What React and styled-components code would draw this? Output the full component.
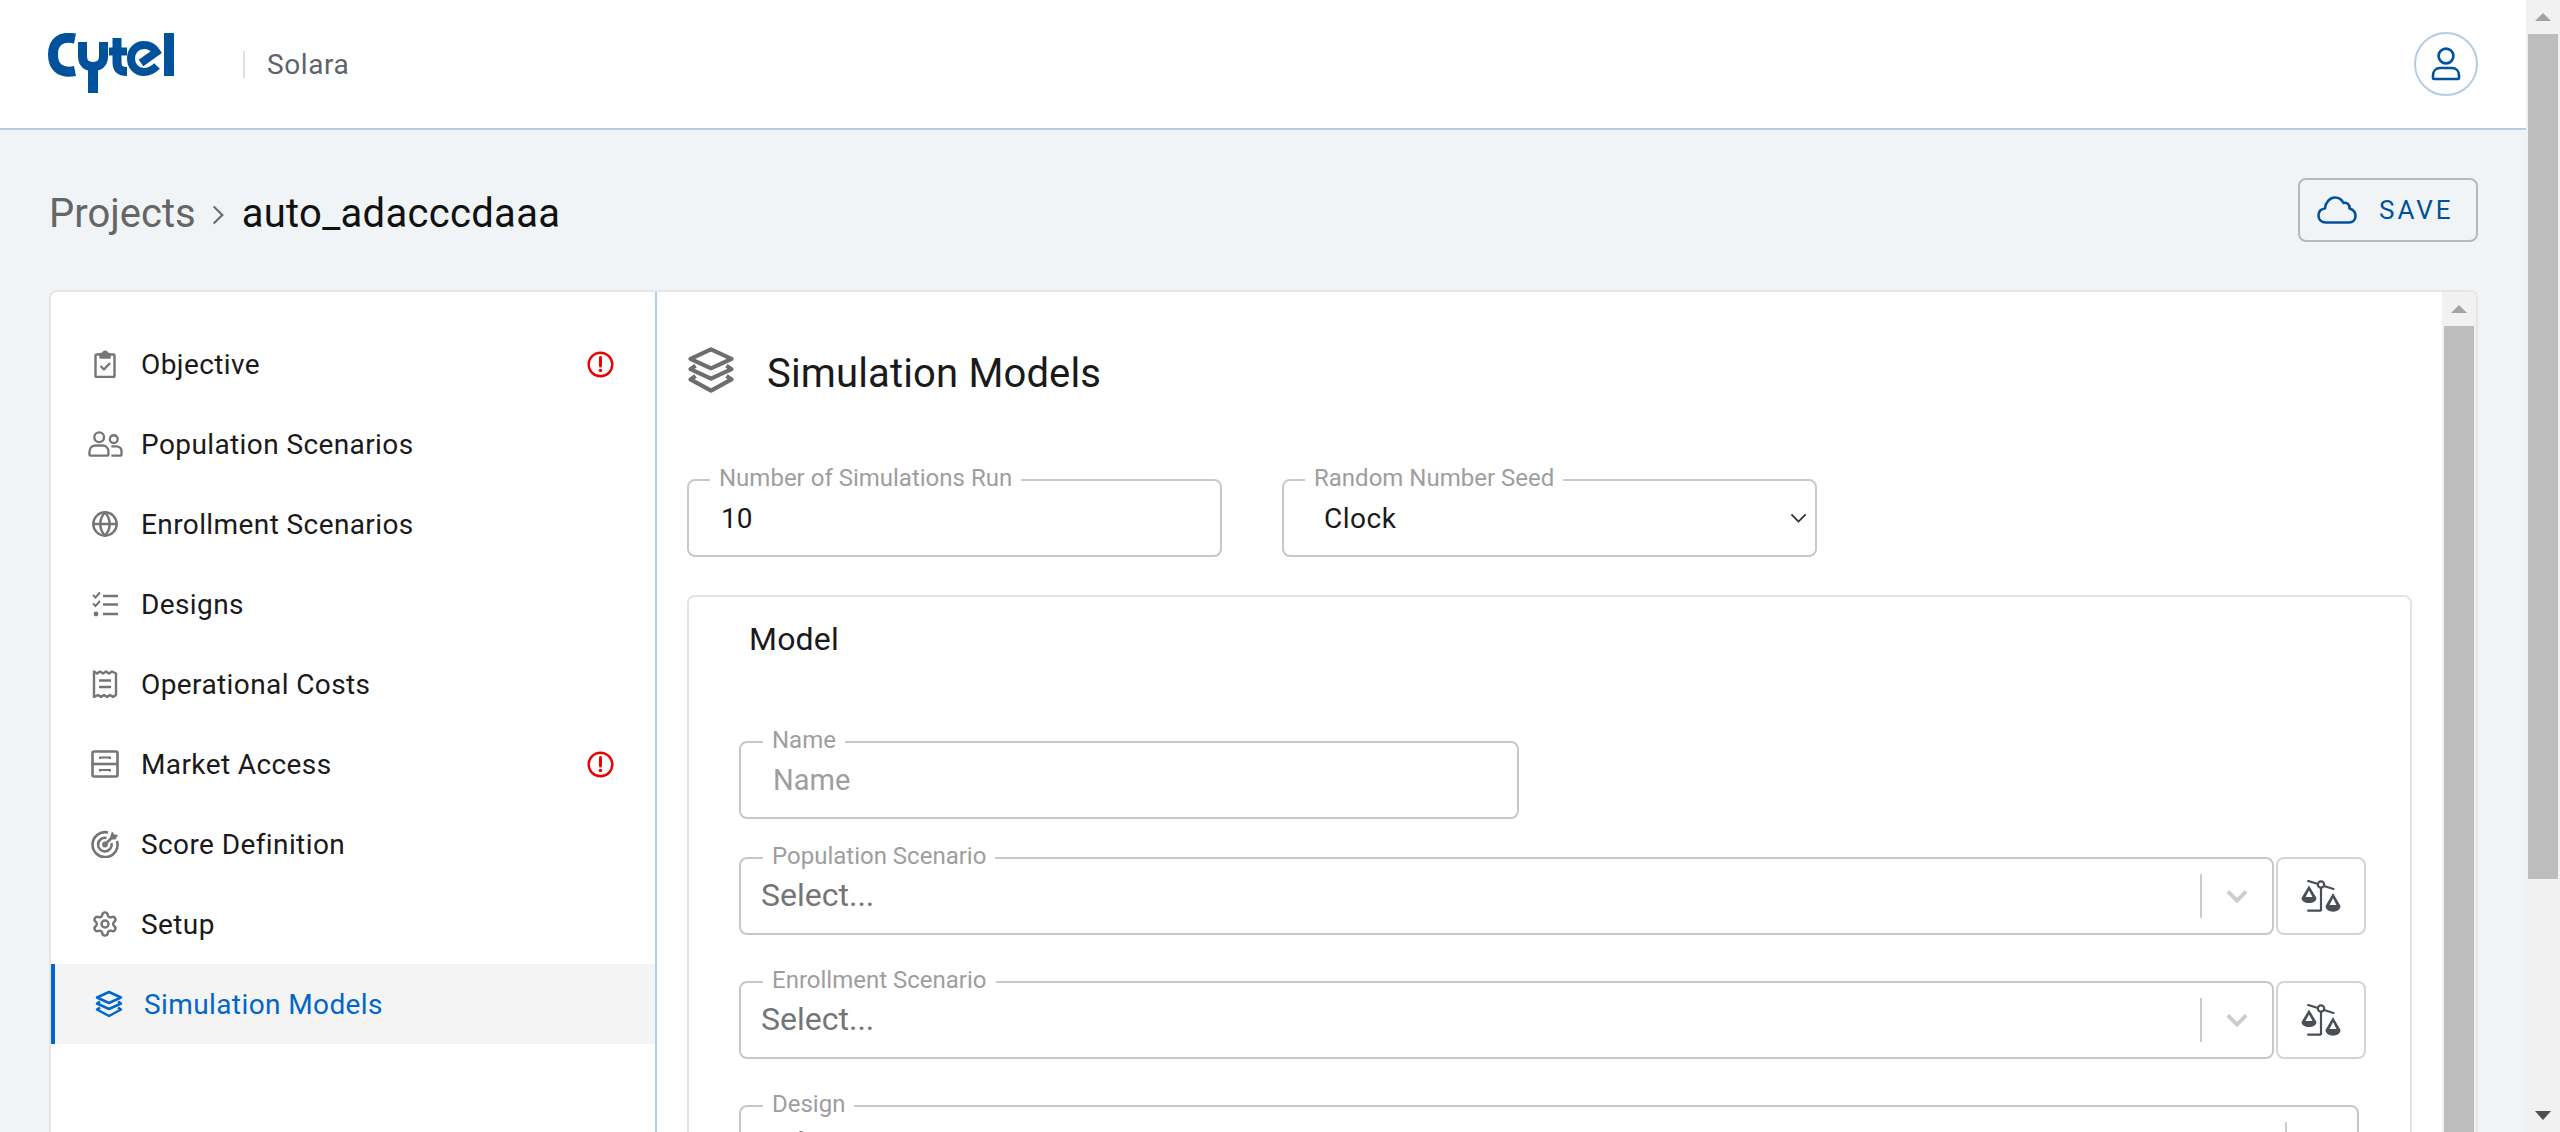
import styled, { createGlobalStyle } from "styled-components"
import { Globe, Settings } from "lucide-react"

const GlobalStyle = createGlobalStyle`
    html, body {
        margin: 0;
        padding: 0;
        height: 100%;
        overflow: hidden;
    }
    body {
        font-family: Roboto, "Liberation Sans", sans-serif;
        color: #1a1a1a;
        background: #f0f4f7;
    }
    * {
        box-sizing: border-box;
    }
`

const CytelLogo = () => (
    <svg width="126" height="60" viewBox="0 0 126 60" fill="none" stroke="#00529b">
        <path d="M27 5.5C12 2.5 5 9.5 5 21.5S12 41 27 38" strokeWidth="10" />
        <path d="M34.5 9V23C34.5 31 39 33.5 45 33.5S55.5 31 55.5 23V9" strokeWidth="9" />
        <path d="M45 33V60" strokeWidth="10" />
        <path d="M69 5V29C69 36 72 38.5 79 38.5" strokeWidth="9" />
        <path d="M61 18.5H79" strokeWidth="8" />
        <path d="M109 33C104 38 100 39 96 39C88 39 83 33 83 25.5S88 12 96 12C102 12 106 15 108.5 19L93 30" strokeWidth="8" />
        <path d="M121 0V43" strokeWidth="10" />
    </svg>
)

const LayersIcon = ({ size, color, weight }) => (
    <svg width={size} height={size} viewBox="0 0 28 28" fill="none" stroke={color} strokeWidth={weight} strokeLinejoin="round">
        <path d="M14 2L26 7.5 14 13 2 7.5Z" />
        <path d="M5 11.5L2 13.5 14 19 26 13.5 23 11.5" />
        <path d="M5 17.5L2 19.5 14 26 26 19.5 23 17.5" />
    </svg>
)

const ScaleIcon = () => (
    <svg width="40" height="32" viewBox="0 0 40 32" fill="none" stroke="#4a4f57" strokeWidth="2.2">
        <circle cx="20" cy="4.5" r="3.2" />
        <path d="M6.3 .7L17 4M23 6L33.3 9.3M20 8V31M6.3 30.7H20" />
        <path
            d="M8 5.5L.5 18C.5 21 4 23 8 23S15.5 21 15.5 18ZM8 10.5L4.5 17H11.5Z"
            fill="#4a4f57"
            fillRule="evenodd"
            stroke="none"
        />
        <path
            d="M32 13L24.5 26C24.5 29.5 28 31.7 32 31.7S39.5 29.5 39.5 26ZM32 18L28.5 25H35.5Z"
            fill="#4a4f57"
            fillRule="evenodd"
            stroke="none"
        />
    </svg>
)

const ClipboardIcon = () => (
    <svg width="28" height="28" viewBox="0 0 28 28" fill="none" stroke="#757575" strokeWidth="2.4" strokeLinejoin="round">
        <path d="M9.5 4.5H5.5A1 1 0 0 0 4.5 5.5V26A1 1 0 0 0 5.5 27H22.5A1 1 0 0 0 23.5 26V5.5A1 1 0 0 0 22.5 4.5H18.5" />
        <path d="M9.5 7.5V4H12C12 1 16 1 16 4H18.5V7.5Z" fill="#757575" />
        <path d="M9.5 16L13 19.5 19 13" />
    </svg>
)

const UsersIcon = () => (
    <svg width="35" height="28" viewBox="0 0 36 28" fill="none" stroke="#757575" strokeWidth="2.4">
        <circle cx="11.5" cy="7" r="5" />
        <circle cx="26.5" cy="9" r="4" />
        <path d="M1.5 22C1.5 17.5 5 15.5 8 15.5H15C18 15.5 21 17.5 21 22V25A1 1 0 0 1 20 26H2.5A1 1 0 0 1 1.5 25Z" />
        <path d="M24 16.5H29C32 16.5 34.5 18 34.5 22V25A1 1 0 0 1 33.5 26H24" />
    </svg>
)

const ChecklistIcon = () => (
    <svg width="28" height="28" viewBox="0 0 28 28" fill="none" stroke="#757575" strokeWidth="2.4">
        <path d="M12 6H27M12 14.5H27M12 24H27" />
        <path d="M2 5L4.5 7.5 9 2.5M2 13.5L4.5 16 9 11" strokeWidth="1.9" />
        <circle cx="5" cy="24" r="2.4" fill="#757575" stroke="none" />
    </svg>
)

const ReceiptIcon = () => (
    <svg width="28" height="28" viewBox="0 0 28 28" fill="none" stroke="#757575" strokeWidth="2.4">
        <path d="M3 1.5L6 3.5 9 1.5 12 3.5 15 1.5 18 3.5 21 1.5 25 3.5V25L22 27 19 25 16 27 13 25 10 27 7 25 3 27Z" strokeLinejoin="round" />
        <path d="M8 10.5H20M8 17H20" strokeWidth="2.6" />
    </svg>
)

const CabinetIcon = () => (
    <svg width="28" height="28" viewBox="0 0 28 28" fill="none" stroke="#757575" strokeWidth="2.6">
        <rect x="1.5" y="1.5" width="25" height="25" rx="1.5" />
        <path d="M1.5 14H26.5" />
        <path d="M9 9V7.5H19V9M9 21.5V20H19V21.5" strokeWidth="2" />
    </svg>
)

const TargetIcon = () => (
    <svg width="28" height="28" viewBox="0 0 28 28" fill="none" stroke="#757575" strokeWidth="2.6">
        <path d="M17 2.5A12.5 12.5 0 1 0 26 11" />
        <path d="M15.5 8A6.8 6.8 0 1 0 20.5 13" />
        <circle cx="14" cy="14.5" r="1.6" fill="#757575" />
        <path d="M14 14.5L21 7.5" />
        <path d="M19 7L21 1.5 23.5 4.5 27 5 24.5 9.5 20.5 9.5Z" fill="#757575" stroke="none" />
    </svg>
)

const AlertIcon = () => (
    <svg width="27" height="27" viewBox="0 0 27 27" fill="none" stroke="#ee0000">
        <circle cx="13.5" cy="13.5" r="11.8" strokeWidth="2.4" />
        <path d="M13.5 6.5V15" strokeWidth="3" strokeLinecap="round" />
        <circle cx="13.5" cy="19.5" r="1.7" fill="#ee0000" stroke="none" />
    </svg>
)

const PersonIcon = () => (
    <svg width="30" height="34" viewBox="0 0 30 34" fill="none" stroke="#00529b" strokeWidth="2.6">
        <circle cx="15" cy="9" r="7.4" />
        <path d="M9 21H21C25 21 28 24 28 28.5V31A1 1 0 0 1 27 32H3A1 1 0 0 1 2 31V28.5C2 24 5 21 9 21Z" />
    </svg>
)

const CloudIcon = () => (
    <svg width="40" height="28" viewBox="0 0 40 28" fill="none" stroke="#00529b" strokeWidth="2.6">
        <path d="M9 26.5C4.5 26.5 1.5 23.5 1.5 19.5S4 13 8 12.5C8.5 6 13 1.5 18 1.5C22 1.5 25 4 26.5 7C30 6 33 9 32.5 12.5C36 13.5 38.5 16 38.5 20C38.5 24 35.5 26.5 32 26.5Z" strokeLinejoin="round" />
    </svg>
)

const Chevron = ({ color, width, height, weight }) => (
    <svg width={width} height={height} viewBox="0 0 24 14" fill="none" stroke={color} strokeWidth={weight}>
        <path d="M2 2L12 12 22 2" />
    </svg>
)

const menu = [
    { label: "Objective", icon: <ClipboardIcon />, alert: true },
    { label: "Population Scenarios", icon: <UsersIcon /> },
    { label: "Enrollment Scenarios", icon: <Globe size={28} color="#757575" strokeWidth={2.1} /> },
    { label: "Designs", icon: <ChecklistIcon /> },
    { label: "Operational Costs", icon: <ReceiptIcon /> },
    { label: "Market Access", icon: <CabinetIcon />, alert: true },
    { label: "Score Definition", icon: <TargetIcon /> },
    { label: "Setup", icon: <Settings size={28} color="#757575" strokeWidth={2.1} /> },
]

function ScrollBar({ thumbHeight, downArrow }) {
    return (
        <Track>
            <ArrowBox>
                <ArrowUp />
            </ArrowBox>
            <Thumb style={{ height: thumbHeight }} />
            {downArrow && (
                <ArrowDownBox>
                    <ArrowDown />
                </ArrowDownBox>
            )}
        </Track>
    )
}

function SelectField({ label, compare, narrow }) {
    return (
        <SelectRow>
            <Field $grow $narrow={narrow}>
                <FieldLabel $inset>{label}</FieldLabel>
                <SelectBody>
                    <Placeholder>Select...</Placeholder>
                    <SelectDivider />
                    <SelectArrow>
                        <Chevron color="#cccccc" width="22" height="14" weight="4.2" />
                    </SelectArrow>
                </SelectBody>
            </Field>
            {compare && (
                <CompareButton>
                    <ScaleIcon />
                </CompareButton>
            )}
        </SelectRow>
    )
}

export default function App() {
    return (
        <Screen>
            <GlobalStyle />
            <Main>
                <Header>
                    <Brand>
                        <CytelLogo />
                        <BrandDivider />
                        <AppName>Solara</AppName>
                    </Brand>
                    <UserButton>
                        <PersonIcon />
                    </UserButton>
                </Header>
                <PageHead>
                    <Breadcrumb>
                        <Crumb>Projects</Crumb>
                        <CrumbArrow>
                            <svg width="12" height="22" viewBox="0 0 14 24" fill="none" stroke="#6e6e6e" strokeWidth="2.6">
                                <path d="M2 2L12 12 2 22" />
                            </svg>
                        </CrumbArrow>
                        <CurrentCrumb>auto_adacccdaaa</CurrentCrumb>
                    </Breadcrumb>
                    <SaveButton>
                        <CloudIcon />
                        <span>SAVE</span>
                    </SaveButton>
                </PageHead>
                <Panel>
                    <Sidebar>
                        {menu.map((m) => (
                            <MenuItem key={m.label}>
                                <MenuIcon>{m.icon}</MenuIcon>
                                <span>{m.label}</span>
                                {m.alert && (
                                    <AlertSlot>
                                        <AlertIcon />
                                    </AlertSlot>
                                )}
                            </MenuItem>
                        ))}
                        <MenuItem $active>
                            <MenuIcon>
                                <LayersIcon size={28} color="#0066cc" weight={2.5} />
                            </MenuIcon>
                            <span>Simulation Models</span>
                        </MenuItem>
                    </Sidebar>
                    <Content>
                        <TitleRow>
                            <LayersIcon size={48} color="#6e6e6e" weight={2.4} />
                            <Title>Simulation Models</Title>
                        </TitleRow>
                        <TopFields>
                            <Field>
                                <FieldLabel>Number of Simulations Run</FieldLabel>
                                <ValueInput readOnly value="10" />
                            </Field>
                            <Field>
                                <FieldLabel>Random Number Seed</FieldLabel>
                                <ClockValue>
                                    <span>Clock</span>
                                    <Chevron color="#2b2b2b" width="17" height="10" weight="2.4" />
                                </ClockValue>
                            </Field>
                        </TopFields>
                        <ModelCard>
                            <ModelTitle>Model</ModelTitle>
                            <NameField>
                                <FieldLabel $inset>Name</FieldLabel>
                                <NameInput readOnly placeholder="Name" />
                            </NameField>
                            <SelectField label="Population Scenario" compare />
                            <SelectField label="Enrollment Scenario" compare />
                            <SelectField label="Design" narrow />
                        </ModelCard>
                    </Content>
                    <ScrollBar thumbHeight={1000} />
                </Panel>
            </Main>
            <ScrollBar thumbHeight={845} downArrow />
        </Screen>
    )
}

const Screen = styled.div`
    display: flex;
    height: 100vh;
    overflow: hidden;
`
const Main = styled.div`
    flex: 1;
    min-width: 0;
    display: flex;
    flex-direction: column;
    overflow: hidden;
`
const Track = styled.div`
    flex: none;
    position: relative;
    width: 34px;
    height: 100%;
    padding: 0 2px;
    background: #f1f1f1;
    display: flex;
    flex-direction: column;
    overflow: hidden;
`
const ArrowBox = styled.div`
    flex: none;
    height: 34px;
    display: flex;
    align-items: center;
    justify-content: center;
`
const ArrowDownBox = styled(ArrowBox)`
    position: absolute;
    left: 0;
    right: 0;
    bottom: 0;
`
const ArrowUp = styled.div`
    width: 0;
    height: 0;
    border-left: 8px solid transparent;
    border-right: 8px solid transparent;
    border-bottom: 8px solid #a3a3a3;
`
const ArrowDown = styled.div`
    width: 0;
    height: 0;
    border-left: 8px solid transparent;
    border-right: 8px solid transparent;
    border-top: 9px solid #505050;
`
const Thumb = styled.div`
    flex: none;
    background: #bdbdbd;
`
const Header = styled.header`
    flex: none;
    height: 130px;
    padding: 0 48px;
    background: #ffffff;
    border-bottom: 2px solid #b5cde3;
    display: flex;
    align-items: center;
    justify-content: space-between;
`
const Brand = styled.div`
    display: flex;
    align-items: center;
    height: 100%;
    padding-bottom: 4px;
    svg {
        margin-top: 2px;
    }
`
const BrandDivider = styled.div`
    width: 2px;
    height: 27px;
    margin: 4px 22px 0 69px;
    background: #e0e0e0;
`
const AppName = styled.div`
    font-size: 28px;
    letter-spacing: 0.6px;
    color: #5f6368;
    margin-top: 4px;
`
const UserButton = styled.div`
    width: 64px;
    height: 64px;
    border: 2px solid #b5cde3;
    border-radius: 50%;
    display: flex;
    align-items: center;
    justify-content: center;
`
const PageHead = styled.div`
    flex: none;
    height: 160px;
    padding: 0 48px 0 49px;
    display: flex;
    align-items: center;
    justify-content: space-between;
`
const Breadcrumb = styled.div`
    display: flex;
    align-items: center;
    margin-top: 6px;
`
const Crumb = styled.span`
    font-size: 40px;
    color: #666666;
`
const CrumbArrow = styled.span`
    display: flex;
    margin: 4px 18px 0 16px;
`
const CurrentCrumb = styled.span`
    font-size: 40px;
    letter-spacing: 0.3px;
    color: #111111;
`
const SaveButton = styled.button`
    width: 180px;
    height: 64px;
    background: transparent;
    border: 2px solid #b4b9bd;
    border-radius: 8px;
    padding: 0 0 0 17px;
    display: flex;
    align-items: center;
    gap: 22px;
    color: #00529b;
    font-family: inherit;
    font-size: 26px;
    letter-spacing: 3px;
`
const Panel = styled.div`
    flex: 1;
    min-height: 0;
    margin: 0 48px 0 49px;
    background: #ffffff;
    border: 2px solid #e5e5e5;
    border-bottom: none;
    border-radius: 8px 8px 0 0;
    display: flex;
    overflow: hidden;
`
const Sidebar = styled.nav`
    flex: none;
    width: 606px;
    padding-top: 32px;
    border-right: 2px solid #b5cde3;
`
const MenuItem = styled.div`
    height: 80px;
    display: flex;
    align-items: center;
    padding: 0 41px 0 ${(p) => (p.$active ? "40px" : "36px")};
    border-left: 4px solid ${(p) => (p.$active ? "#0066cc" : "transparent")};
    background: ${(p) => (p.$active ? "#f4f4f4" : "transparent")};
    color: ${(p) => (p.$active ? "#0066cc" : "#1a1a1a")};
    font-size: 28px;
    letter-spacing: 0.4px;
    gap: ${(p) => (p.$active ? "21px" : "22px")};
`
const MenuIcon = styled.span`
    flex: none;
    width: 28px;
    height: 28px;
    display: flex;
    align-items: center;
    justify-content: center;
    svg {
        flex: none;
    }
`
const AlertSlot = styled.span`
    display: flex;
    margin-left: auto;
`
const Content = styled.main`
    flex: 1;
    min-width: 0;
    padding: 54px 30px 0 30px;
    overflow: hidden;
`
const TitleRow = styled.div`
    display: flex;
    align-items: center;
    gap: 32px;
    height: 47px;
    margin-bottom: 74px;
`
const Title = styled.h1`
    margin: 8px 0 0 0;
    font-size: 40px;
    font-weight: 400;
    color: #1a1a1a;
    letter-spacing: 0.15px;
`
const TopFields = styled.div`
    display: flex;
    gap: 60px;
    margin-bottom: 38px;
`
const Field = styled.fieldset`
    margin: 0;
    padding: 0;
    min-width: 0;
    height: 90px;
    width: ${(p) => (p.$grow ? "auto" : "535px")};
    flex: ${(p) => (p.$grow ? "1" : "none")};
    margin-right: ${(p) => (p.$narrow ? "7px" : "0")};
    border: 2px solid #c8c8c8;
    border-radius: 8px;
`
const FieldLabel = styled.legend`
    margin-left: ${(p) => (p.$inset ? "22px" : "21px")};
    padding: 0 9px 4px 9px;
    font-size: 24px;
    line-height: 22px;
    color: #9e9e9e;
`
const ValueInput = styled.input`
    display: block;
    width: 100%;
    height: 50px;
    padding: 0 0 0 32px;
    border: none;
    outline: none;
    background: transparent;
    font-family: inherit;
    font-size: 28px;
    color: #1a1a1a;
`
const ClockValue = styled.div`
    height: 50px;
    padding: 0 8px 0 40px;
    display: flex;
    align-items: center;
    justify-content: space-between;
    font-size: 28px;
    letter-spacing: 0.5px;
    color: #1a1a1a;
`
const ModelCard = styled.section`
    padding: 0 44px 0 50px;
    border: 2px solid #e3e3e3;
    border-radius: 8px 8px 0 0;
    height: 900px;
`
const ModelTitle = styled.h2`
    margin: 0 0 0 10px;
    height: 132px;
    padding-top: 24px;
    font-size: 32px;
    line-height: 36px;
    letter-spacing: 0.2px;
    font-weight: 400;
    color: #1a1a1a;
`
const NameField = styled(Field)`
    width: 780px;
    margin-bottom: 26px;
`
const NameInput = styled(ValueInput)`
    padding-left: 32px;
    font-size: 29px;
    &::placeholder {
        color: #9e9e9e;
        opacity: 1;
    }
`
const SelectRow = styled.div`
    display: flex;
    gap: 2px;
    margin-bottom: 34px;
    align-items: flex-end;
`
const SelectBody = styled.div`
    height: 48px;
    padding-left: 20px;
    display: flex;
    align-items: center;
`
const Placeholder = styled.span`
    flex: 1;
    font-size: 32px;
    color: #757575;
`
const SelectDivider = styled.div`
    width: 2px;
    height: 44px;
    margin-top: 2px;
    background: #cccccc;
`
const SelectArrow = styled.div`
    flex: none;
    width: 70px;
    display: flex;
    justify-content: center;
    margin-top: 2px;
`
const CompareButton = styled.button`
    flex: none;
    width: 90px;
    height: 78px;
    padding: 0;
    background: #ffffff;
    border: 2px solid #d0d5dc;
    border-radius: 8px;
    display: flex;
    align-items: center;
    justify-content: center;
`
